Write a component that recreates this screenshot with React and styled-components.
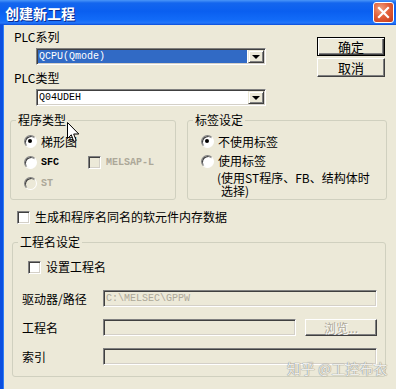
import React from 'react'
import styled, { createGlobalStyle } from 'styled-components'

const GlobalStyle = createGlobalStyle`
  html, body {
    margin: 0;
    padding: 0;
    background: #ece9d8;
  }
  body {
    width: 396px;
    height: 389px;
    overflow: hidden;
    font-family: "Noto Sans CJK SC", "Liberation Sans", sans-serif;
    font-size: 12px;
    color: #000;
  }
`

const App = () => {
  return (
    <Window>
      <GlobalStyle />
      <TitleBar>
        <Title>创建新工程</Title>
        <CloseButton aria-label='close'>
          <svg width='13' height='13' viewBox='0 0 13 13'>
            <path d='M2 2 L11 11 M11 2 L2 11' stroke='#fff' strokeWidth='2.2' strokeLinecap='square' />
          </svg>
        </CloseButton>
      </TitleBar>

      <Body>
        <TopRow>
          <LeftCol>
            <FieldLabel>PLC系列</FieldLabel>
            <Combo>
              <ComboValue selected>QCPU(Qmode)</ComboValue>
              <DropButton><Arrow /></DropButton>
            </Combo>
            <FieldLabel style={{ marginTop: 5 }}>PLC类型</FieldLabel>
            <Combo>
              <ComboValue>Q04UDEH</ComboValue>
              <DropButton><Arrow /></DropButton>
            </Combo>
          </LeftCol>
          <ButtonCol>
            <PushButton isDefault>确定</PushButton>
            <PushButton>取消</PushButton>
          </ButtonCol>
        </TopRow>

        <GroupRow>
          <Group width={166}>
            <Legend>程序类型</Legend>
            <GroupContent>
              <OptionRow>
                <Radio checked />
                <OptionText>梯形图</OptionText>
              </OptionRow>
              <OptionRow>
                <OptionCell>
                  <Radio />
                  <Mono bold>SFC</Mono>
                </OptionCell>
                <CheckBox disabled />
                <Mono bold disabled>MELSAP-L</Mono>
              </OptionRow>
              <OptionRow>
                <Radio disabled />
                <Mono bold disabled>ST</Mono>
              </OptionRow>
            </GroupContent>
          </Group>

          <Group width={200}>
            <Legend>标签设定</Legend>
            <GroupContent>
              <OptionRow>
                <Radio checked />
                <OptionText>不使用标签</OptionText>
              </OptionRow>
              <OptionRow height={18}>
                <Radio />
                <OptionText>使用标签</OptionText>
              </OptionRow>
              <Note>
                <NoteLine>(使用ST程序、FB、结构体时</NoteLine>
                <NoteLine indent>选择)</NoteLine>
              </Note>
            </GroupContent>
          </Group>
        </GroupRow>

        <CheckRow>
          <CheckBox />
          <OptionText>生成和程序名同名的软元件内存数据</OptionText>
        </CheckRow>

        <ProjectGroup>
          <Legend>工程名设定</Legend>
          <CheckRow inner>
            <CheckBox />
            <OptionText>设置工程名</OptionText>
          </CheckRow>

          <FieldRows>
            <FieldRow>
              <RowLabel>驱动器/路径</RowLabel>
              <TextBox width={274}>
                <Mono disabled>C:\MELSEC\GPPW</Mono>
              </TextBox>
            </FieldRow>
            <FieldRow>
              <RowLabel>工程名</RowLabel>
              <TextBox width={193} />
              <BrowseButton>浏览...</BrowseButton>
            </FieldRow>
            <FieldRow>
              <RowLabel>索引</RowLabel>
              <TextBox width={274} />
            </FieldRow>
          </FieldRows>
        </ProjectGroup>
      </Body>

      <Cursor width='13' height='21' viewBox='0 0 13 21'>
        <path
          d='M0.5 0.5 L0.5 16.5 L4.3 12.8 L6.8 19.5 L9.2 18.5 L6.7 12 L11.8 12 Z'
          fill='#fff'
          stroke='#000'
          strokeWidth='1'
        />
      </Cursor>
      <Watermark>知乎 @工控布衣</Watermark>
    </Window>
  )
}

export default App

// STYLING
const Window = styled.div`
  position: relative;
  width: 396px;
  height: 389px;
  display: flex;
  flex-direction: column;
  background: #ece9d8;
`

const TitleBar = styled.div`
  height: 25px;
  flex: none;
  display: flex;
  align-items: center;
  justify-content: space-between;
  padding: 0 2px 0 5px;
  box-sizing: border-box;
  background: linear-gradient(
    to bottom,
    #4a96f8 0%,
    #1466ee 12%,
    #0a5ff0 45%,
    #126bf8 80%,
    #2477fa 92%,
    #0a4cd8 100%
  );
`

const Title = styled.div`
  color: #fff;
  font-weight: 700;
  font-size: 14px;
  line-height: 16px;
  text-shadow: 1px 1px 0 #0b2a8c;
`

const CloseButton = styled.div`
  width: 21px;
  height: 21px;
  box-sizing: border-box;
  border: 1px solid #fff;
  border-radius: 3px;
  display: flex;
  align-items: center;
  justify-content: center;
  background: radial-gradient(circle at 35% 30%, #f0a080 0%, #e2603a 45%, #c4391a 100%);
`

const Body = styled.div`
  flex: 1;
  display: flex;
  flex-direction: column;
  border-left: 3px solid #0b4fe0;
  box-shadow: inset 1px 0 0 #2e7ef6;
`

const TopRow = styled.div`
  display: flex;
  padding: 4px 11px 0 11px;
`

const LeftCol = styled.div`
  width: 252px;
  display: flex;
  flex-direction: column;
`

const FieldLabel = styled.div`
  height: 16px;
  line-height: 16px;
`

const Combo = styled.div`
  margin: 3px 0 0 22px;
  width: 230px;
  height: 17px;
  box-sizing: border-box;
  display: flex;
  background: #fff;
  border: 1px solid;
  border-color: #808080 #fff #fff #808080;
  box-shadow: inset 1px 1px 0 #404040, inset -1px -1px 0 #d4d0c8;
  padding: 1px;
`

const ComboValue = styled.div`
  flex: 1;
  font-family: "Liberation Mono", "DejaVu Sans Mono", monospace;
  font-size: 10px;
  line-height: 13px;
  padding-left: 1px;
  margin-right: 1px;
  background: ${p => (p.selected ? '#316ac5' : 'transparent')};
  color: ${p => (p.selected ? '#fff' : '#000')};
`

const DropButton = styled.div`
  width: 16px;
  box-sizing: border-box;
  display: flex;
  align-items: center;
  justify-content: center;
  background: #ece9d8;
  border: 1px solid;
  border-color: #ece9d8 #404040 #404040 #ece9d8;
  box-shadow: inset 1px 1px 0 #fff, inset -1px -1px 0 #808080;
`

const Arrow = styled.span`
  width: 0;
  height: 0;
  border-left: 4px solid transparent;
  border-right: 4px solid transparent;
  border-top: 4px solid #000;
`

const ButtonCol = styled.div`
  margin: 8px 0 0 auto;
  display: flex;
  flex-direction: column;
  gap: 2px;
`

const PushButton = styled.div`
  width: 68px;
  height: 19px;
  box-sizing: border-box;
  display: flex;
  align-items: center;
  justify-content: center;
  font-size: 13px;
  line-height: 15px;
  background: #ece9d8;
  border: 1px solid;
  border-color: ${p => (p.isDefault ? '#000' : '#fff #404040 #404040 #fff')};
  box-shadow: ${p =>
    p.isDefault
      ? 'inset 1px 1px 0 #fff, inset -1px -1px 0 #404040, inset -2px -2px 0 #808080'
      : 'inset -1px -1px 0 #808080'};
`

const GroupRow = styled.div`
  display: flex;
  gap: 11px;
  margin-top: 7px;
  padding-left: 7px;
`

const Group = styled.fieldset`
  width: ${p => p.width}px;
  height: 87px;
  box-sizing: border-box;
  margin: 0;
  padding: 0;
  border: 1px solid #d0d0bf;
  border-radius: 3px;
  min-width: 0;
`

const GroupContent = styled.div`
  padding: 4px 0 0 13px;
`

const Legend = styled.legend`
  padding: 0 2px;
  margin-left: 5px;
  font-size: 12px;
  line-height: 14px;
  color: #000;
`

const OptionRow = styled.div`
  height: ${p => p.height || 21}px;
  display: flex;
  align-items: center;
`

const OptionCell = styled.div`
  width: 64px;
  display: flex;
  align-items: center;
`

const OptionText = styled.span`
  margin-left: 4px;
  line-height: 14px;
  white-space: nowrap;
`

const Mono = styled.span`
  margin-left: 4px;
  font-family: "Liberation Mono", "DejaVu Sans Mono", monospace;
  font-size: 10px;
  line-height: 13px;
  font-weight: ${p => (p.bold ? 700 : 400)};
  color: ${p => (p.disabled ? '#aca899' : '#000')};
  white-space: nowrap;
`

const Radio = styled.span`
  position: relative;
  flex: none;
  width: 13px;
  height: 13px;
  box-sizing: border-box;
  border-radius: 50%;
  border: 1px solid;
  border-color: #808080 #fff #fff #808080;
  box-shadow: inset 1px 1px 0 #404040;
  background: ${p => (p.disabled ? '#ece9d8' : '#fff')};

  &::after {
    content: '';
    display: ${p => (p.checked ? 'block' : 'none')};
    position: absolute;
    left: 3px;
    top: 3px;
    width: 4px;
    height: 4px;
    border-radius: 50%;
    background: #000;
  }
`

const CheckBox = styled.span`
  flex: none;
  width: 13px;
  height: 13px;
  box-sizing: border-box;
  border: 1px solid;
  border-color: #808080 #fff #fff #808080;
  box-shadow: inset 1px 1px 0 #404040, inset -1px -1px 0 #d4d0c8;
  background: ${p => (p.disabled ? '#ece9d8' : '#fff')};
  margin-right: 1px;
`

const Note = styled.div`
  margin: 1px 0 0 16px;
  display: flex;
  flex-direction: column;
`

const NoteLine = styled.div`
  height: 13px;
  line-height: 13px;
  font-size: 12px;
  white-space: nowrap;
  padding-left: ${p => (p.indent ? 4 : 0)}px;
`

const CheckRow = styled.div`
  height: 16px;
  display: flex;
  align-items: center;
  margin-top: ${p => (p.inner ? 10 : 9)}px;
  padding-left: ${p => (p.inner ? 15 : 14)}px;
`

const ProjectGroup = styled.fieldset`
  width: 374px;
  height: 142px;
  box-sizing: border-box;
  margin: 10px 0 0 9px;
  padding: 0;
  border: 1px solid #d0d0bf;
  border-radius: 3px;
  min-width: 0;
`

const FieldRows = styled.div`
  margin-top: 15px;
  padding-left: 9px;
  display: flex;
  flex-direction: column;
  gap: 12px;
`

const FieldRow = styled.div`
  height: 17px;
  display: flex;
  align-items: center;
`

const RowLabel = styled.div`
  width: 81px;
  line-height: 14px;
`

const TextBox = styled.div`
  width: ${p => p.width}px;
  height: 17px;
  box-sizing: border-box;
  display: flex;
  align-items: center;
  border: 1px solid;
  border-color: #808080 #fff #fff #808080;
  box-shadow: inset 1px 1px 0 #404040, inset -1px -1px 0 #d4d0c8;
  background: #ece9d8;

  & > span {
    margin-left: 2px;
  }
`

const BrowseButton = styled.div`
  margin-left: 9px;
  width: 72px;
  height: 17px;
  box-sizing: border-box;
  display: flex;
  align-items: center;
  justify-content: center;
  color: #aca899;
  text-shadow: 1px 1px 0 #fff;
  line-height: 14px;
  border: 1px solid;
  border-color: #fff #404040 #404040 #fff;
  box-shadow: inset -1px -1px 0 #808080;
`

const Cursor = styled.svg`
  position: absolute;
  left: 67px;
  top: 122px;
`

const Watermark = styled.div`
  position: absolute;
  left: 287px;
  top: 360px;
  font-size: 14px;
  line-height: 16px;
  color: rgba(255, 255, 255, 0.85);
  text-shadow: 0 0 1px #8a8a80, 0 0 1px #8a8a80;
  white-space: nowrap;
`
